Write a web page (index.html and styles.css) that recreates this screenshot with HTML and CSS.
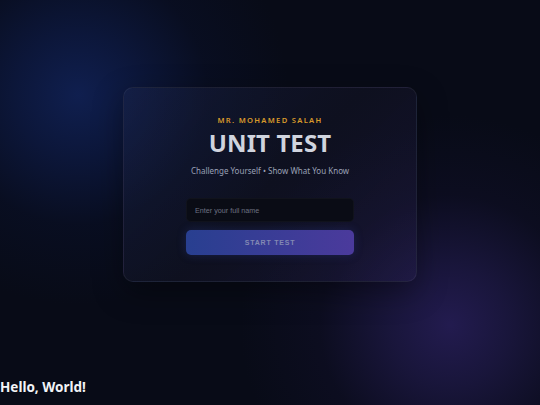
FILE: index.html
```html
<!DOCTYPE html>
<html lang="en">
<head>
<meta charset="utf-8">
<title>Unit Test</title>
<link rel="stylesheet" href="styles.css">
</head>
<body>
<main class="stage">
  <section class="card">
    <p class="teacher">MR. MOHAMED SALAH</p>
    <h1 class="title">UNIT TEST</h1>
    <p class="tagline">Challenge Yourself • Show What You Know</p>
    <form class="form">
      <input class="name-input" type="text" placeholder="Enter your full name">
      <button class="start-btn" type="button">START TEST</button>
    </form>
  </section>
</main>
<p class="hello">Hello, World!</p>
</body>
</html>
```

FILE: styles.css
```css
* { box-sizing: border-box; }
html, body { height: 100%; }
body {
  margin: 0;
  min-height: 100vh;
  display: flex;
  flex-direction: column;
  font-family: "Noto Sans", "Open Sans", sans-serif;
  color: #e8eaf0;
  background-color: #080b17;
  background-image:
    radial-gradient(circle at 78px 95px, rgba(16, 32, 82, 0.95) 0, rgba(14, 28, 74, 0.7) 60px, rgba(10, 20, 55, 0.3) 130px, rgba(8, 12, 30, 0) 210px),
    radial-gradient(circle at 450px 325px, rgba(36, 28, 82, 0.95) 0, rgba(32, 26, 74, 0.7) 60px, rgba(22, 18, 52, 0.3) 130px, rgba(10, 10, 28, 0) 210px);
}
.stage {
  flex: 1;
  display: flex;
  align-items: center;
  justify-content: center;
  padding-bottom: 9px;
}
.card {
  width: 294px;
  padding: 26px 40px 26px;
  border: 1px solid rgba(255, 255, 255, 0.06);
  border-radius: 10px;
  background: linear-gradient(135deg, rgba(30, 40, 80, 0.4), rgba(20, 22, 40, 0.5) 50%, rgba(40, 32, 80, 0.4));
  box-shadow: 0 10px 30px rgba(0, 0, 0, 0.35);
  display: flex;
  flex-direction: column;
  align-items: center;
  text-align: center;
}
.teacher {
  margin: 0;
  font-size: 7.6px;
  line-height: 12px;
  font-weight: 600;
  letter-spacing: 1.3px;
  color: #d99a2b;
}
.title {
  margin: 2px 0 0;
  font-size: 24px;
  line-height: 30px;
  font-weight: 700;
  color: #d0d4de;
  letter-spacing: 0.1px;
}
.tagline {
  margin: 6px 0 0;
  font-size: 8px;
  line-height: 14px;
  color: #9aa1b6;
}
.form {
  width: 168px;
  margin-top: 20px;
  display: flex;
  flex-direction: column;
  gap: 8px;
}
.name-input {
  height: 24px;
  width: 100%;
  padding: 0 8px;
  border: 1px solid rgba(255, 255, 255, 0.03);
  border-radius: 5px;
  background: #0a0c15;
  font-family: "Liberation Sans", Arial, sans-serif;
  font-size: 7.2px;
  color: #c8ccd8;
  outline: none;
}
.name-input::placeholder { color: #6c7182; }
.start-btn {
  height: 25px;
  width: 100%;
  border: none;
  border-radius: 5px;
  background: linear-gradient(90deg, #283f90, #4b3a9c);
  box-shadow: 0 0 10px rgba(60, 80, 200, 0.25);
  font-family: "Liberation Sans", Arial, sans-serif;
  font-size: 7px;
  font-weight: 700;
  letter-spacing: 0.8px;
  color: #8389b3;
}
.hello {
  margin: 0 0 8px;
  font-size: 13.5px;
  line-height: 19px;
  font-weight: 700;
  color: #f2f3f6;
}
```
